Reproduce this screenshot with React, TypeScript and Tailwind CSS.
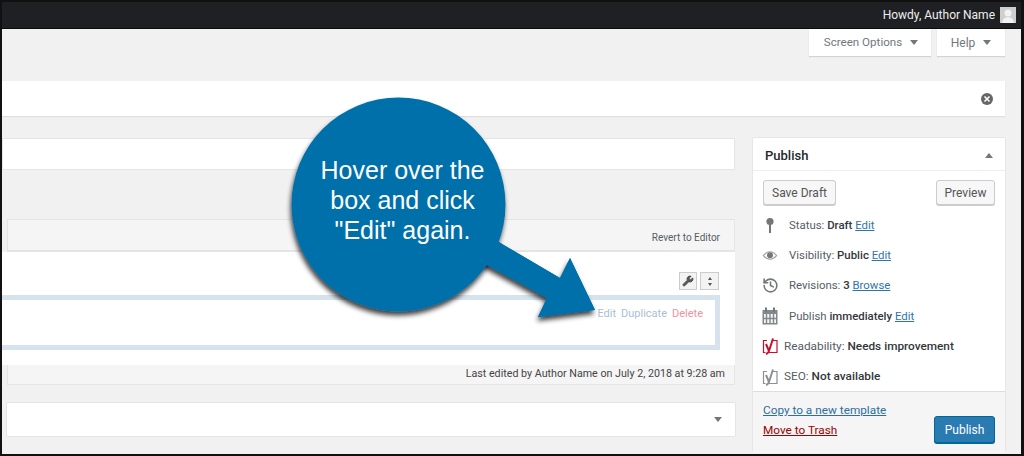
import React from "react";
import { History, Wrench } from "lucide-react";

const font = { fontFamily: 'Roboto, "Open Sans", "Liberation Sans", sans-serif' };

const YoastIcon = ({ color }: { color: string }) => (
  <svg width="16" height="17" viewBox="0 0 16 17" fill="none">
    <path d="M5 2.5H1.5v12h2M10 2.5h5v12H6" stroke={color} strokeWidth="1.2" />
    <path d="M4 6l3 7M11 0.5L7 13q-1 2.5-3 3" stroke={color} strokeWidth="2" />
  </svg>
);

const PinIcon = () => (
  <svg width="10" height="17" viewBox="0 0 10 17">
    <circle cx="5" cy="4.5" r="3.6" fill="#72777c" />
    <rect x="4" y="7" width="2" height="9" fill="#72777c" />
  </svg>
);

const EyeIcon = () => (
  <svg width="16" height="11" viewBox="0 0 20 14">
    <path d="M0.5 7Q5 1.5 10 1.5T19.5 7Q15 12.5 10 12.5T0.5 7Z" fill="#9ea3a8" />
    <path d="M2.5 7Q6 3 10 3T17.5 7Q14 11 10 11T2.5 7Z" fill="#fff" />
    <circle cx="10" cy="6.6" r="3.8" fill="#72777c" />
  </svg>
);

const CalendarIcon = () => (
  <svg width="16" height="18" viewBox="0 0 16 18">
    <rect x="0.5" y="3" width="15" height="14.5" fill="#82878c" />
    <rect x="3" y="0.5" width="2" height="4" fill="#72777c" />
    <rect x="11" y="0.5" width="2" height="4" fill="#72777c" />
    <rect x="2" y="7" width="12" height="9" fill="#f4f4f4" />
    <path d="M4.5 7v9M8 7v9M11.5 7v9M2 11.5h12" stroke="#82878c" strokeWidth="1.4" />
  </svg>
);

const MetaRow = ({ icon, children }: { icon: React.ReactNode; children: React.ReactNode }) => (
  <div className="flex h-[30.4px] items-center">
    <div className="flex w-[24px] shrink-0 justify-center">{icon}</div>
    <div className="whitespace-nowrap pl-[7px] text-[11.4px] text-[#555d66]">{children}</div>
  </div>
);

const Sidebar = () => (
  <div className="h-[313px] w-[252px] shrink-0 bg-white shadow-[0_0_1px_rgba(0,0,0,0.25)]">
    <div className="flex h-[33px] items-center justify-between border-b border-[#eeeeee] pl-[12px] pr-[12px] pt-[3px]">
      <h3 className="text-[13px] font-medium text-[#23282d]">Publish</h3>
      <div className="h-0 w-0 border-x-[4px] border-b-[5px] border-x-transparent border-b-[#72777c]" />
    </div>

    <div className="flex justify-between px-[10px] pt-[9px]">
      <button className="h-[25px] w-[73px] rounded-[3px] border border-[#cccccc] bg-[#f7f7f7] text-[12px] text-[#555555] shadow-[0_1px_0_#cccccc]">
        Save Draft
      </button>
      <button className="h-[25px] w-[59px] rounded-[3px] border border-[#cccccc] bg-[#f7f7f7] text-[12px] text-[#555555] shadow-[0_1px_0_#cccccc]">
        Preview
      </button>
    </div>

    <div className="pl-[5px] pt-[5px]">
      <MetaRow icon={<PinIcon />}>
        Status: <b className="font-medium text-[#32373c]">Draft</b> <a className="text-[#2f74a8] underline">Edit</a>
      </MetaRow>
      <MetaRow icon={<EyeIcon />}>
        Visibility: <b className="font-medium text-[#32373c]">Public</b> <a className="text-[#2f74a8] underline">Edit</a>
      </MetaRow>
      <MetaRow icon={<History size={17} color="#72777c" strokeWidth={2.2} />}>
        Revisions: <b className="font-medium text-[#32373c]">3</b> <a className="text-[#2f74a8] underline">Browse</a>
      </MetaRow>
      <MetaRow icon={<CalendarIcon />}>
        Publish <b className="font-medium text-[#32373c]">immediately</b> <a className="text-[#2f74a8] underline">Edit</a>
      </MetaRow>
      <MetaRow icon={<YoastIcon color="#c8102e" />}>
        <span className="-ml-[5px] text-[11.8px]">
          Readability: <b className="font-medium text-[#32373c]">Needs improvement</b>
        </span>
      </MetaRow>
      <MetaRow icon={<YoastIcon color="#8c8f94" />}>
        <span className="-ml-[5px] text-[11.8px]">
          SEO: <b className="font-medium text-[#32373c]">Not available</b>
        </span>
      </MetaRow>
    </div>

    <div className="mt-[-1px] flex h-[62px] items-end justify-between border-t border-[#dddddd] bg-[#f5f5f5] pb-[10px] pl-[10px] pr-[10px]">
      <div className="flex flex-col gap-[2px] self-start pt-[9px] text-[11.8px] leading-[18px]">
        <a className="text-[#2f6f9f] underline">Copy to a new template</a>
        <a className="text-[#a00000] underline">Move to Trash</a>
      </div>
      <button className="h-[27px] w-[61px] rounded-[3px] border border-[#006799] bg-[#2b7bb3] text-[12px] text-white shadow-[0_1px_0_#006799]">
        Publish
      </button>
    </div>
  </div>
);

const EditorBox = () => (
  <div className="mt-[49px]">
    <div className="ml-[5px] flex h-[33px] items-center justify-end border border-b-2 border-[#e5e5e5] bg-[#f5f5f5] pr-[14px] pt-[5px]">
      <span className="text-[10px] text-[#555d66]">Revert to Editor</span>
    </div>
    <div className="h-[113px] bg-white pt-[20px]">
      <div className="flex justify-end gap-[3px] pr-[16px]">
        <div className="flex h-[18px] w-[18px] items-center justify-center border border-[#cccccc] bg-[#f3f3f3]">
          <Wrench size={12} color="#555" fill="#555" />
        </div>
        <div className="flex h-[18px] w-[19px] flex-col items-center justify-center gap-[3px] border border-[#cccccc] bg-[#f3f3f3]">
          <div className="h-0 w-0 border-x-[2px] border-b-[3px] border-x-transparent border-b-[#555]" />
          <div className="h-0 w-0 border-x-[2px] border-t-[3px] border-x-transparent border-t-[#555]" />
        </div>
      </div>
      <div className="mr-[15px] mt-[5px] flex h-[55px] items-start justify-end border-y-[5px] border-r-[5px] border-[#d6e3ed] pr-[12px] pt-[6px]">
        <div className="flex gap-[5px] text-[11px]">
          <span className="text-[#a9bfd4]">Edit</span>
          <span className="text-[#a9bfd4]">Duplicate</span>
          <span className="text-[#f0929f]">Delete</span>
        </div>
      </div>
    </div>
    <div className="ml-[5px] flex h-[20px] items-center justify-end border-x border-b border-[#e5e5e5] bg-[#f5f5f5] pr-[9px]">
      <span className="text-[10.7px] text-[#444]">Last edited by Author Name on July 2, 2018 at 9:28 am</span>
    </div>
  </div>
);

const Callout = () => (
  <>
    <svg className="absolute left-[280px] top-[90px]" width="340" height="240" viewBox="280 90 340 240">
      <defs>
        <filter id="callout-shadow" x="-10%" y="-10%" width="120%" height="120%">
          <feDropShadow dx="-1" dy="4" stdDeviation="2.5" floodColor="#000" floodOpacity="0.75" />
        </filter>
      </defs>
      <path
        filter="url(#callout-shadow)"
        fill="#0070ab"
        d="M470 256L547 298L538 317L595 310L570 258L560 278L480 231Z"
      />
      <circle cx="398.5" cy="204.5" r="107" fill="#0070ab" filter="url(#callout-shadow)" />
      <path fill="#0070ab" d="M470 256L547 298L538 317L595 310L570 258L560 278L480 231Z" />
    </svg>
    <div
      className="absolute left-[296px] top-[155px] w-[213px] text-center text-[25px] leading-[30px] text-white"
      style={{ fontFamily: '"Liberation Sans", Arial, sans-serif' }}
    >
      Hover over the
      <br />
      box and click
      <br />
      "Edit" again.
    </div>
  </>
);

export default function App() {
  return (
    <div
      className="relative h-[456px] w-[1024px] overflow-hidden bg-[#f1f1f1] pb-[2px] pl-[2px] pr-[3px]"
      style={font}
    >
      <div className="absolute inset-0 border-b-2 border-l-2 border-r-[3px] border-[#111111]" />

      <div className="-ml-[2px] -mr-[3px] flex h-[29px] items-center justify-end gap-[5px] border-t-2 border-b border-t-[#111111] border-b-[#0c0c0c] bg-[#1e2023] pr-[8px]">
        <span className="text-[12px] text-[#eeeeee]">Howdy, Author Name</span>
        <div className="relative h-[16px] w-[16px] overflow-hidden bg-[#cfcfcf]">
          <svg width="16" height="16" viewBox="0 0 16 16">
            <circle cx="8" cy="6" r="3.5" fill="#f2f2f2" />
            <path d="M2 16q1-6 6-6t6 6Z" fill="#f2f2f2" />
          </svg>
        </div>
      </div>

      <div className="flex justify-end gap-[6px] pr-[16px]">
        <div className="flex h-[27px] w-[122px] items-center justify-center gap-[8px] bg-white pl-[2px] text-[11.6px] text-[#72777c] shadow-[0_1px_1px_rgba(0,0,0,0.12)]">
          Screen Options
          <div className="h-0 w-0 border-x-[4px] border-t-[5px] border-x-transparent border-t-[#72777c]" />
        </div>
        <div className="flex h-[27px] w-[68px] items-center justify-center gap-[8px] bg-white text-[12px] text-[#72777c] shadow-[0_1px_1px_rgba(0,0,0,0.12)]">
          Help
          <div className="h-0 w-0 border-x-[4px] border-t-[5px] border-x-transparent border-t-[#72777c]" />
        </div>
      </div>

      <div className="mr-[16px] mt-[25px] flex h-[35px] items-center justify-end bg-white pr-[12px] shadow-[0_1px_1px_rgba(0,0,0,0.08)]">
        <div className="flex h-[12px] w-[12px] items-center justify-center rounded-full bg-[#666]">
          <svg width="8" height="8" viewBox="0 0 8 8">
            <path d="M1.5 1.5l5 5M6.5 1.5l-5 5" stroke="#fff" strokeWidth="1.6" />
          </svg>
        </div>
      </div>

      <div className="mt-[22px] flex gap-[18px] pr-[16px]">
        <div className="w-[733px] shrink-0">
          <div className="h-[32px] border border-[#e5e5e5] bg-white" />
          <EditorBox />
          <div className="mt-[18px] ml-[5px] flex h-[33px] items-center justify-end bg-white pr-[13px] shadow-[0_0_1px_rgba(0,0,0,0.3)]">
            <div className="h-0 w-0 border-x-[4px] border-t-[5px] border-x-transparent border-t-[#72777c]" />
          </div>
        </div>
        <Sidebar />
      </div>

      <Callout />
    </div>
  );
}
